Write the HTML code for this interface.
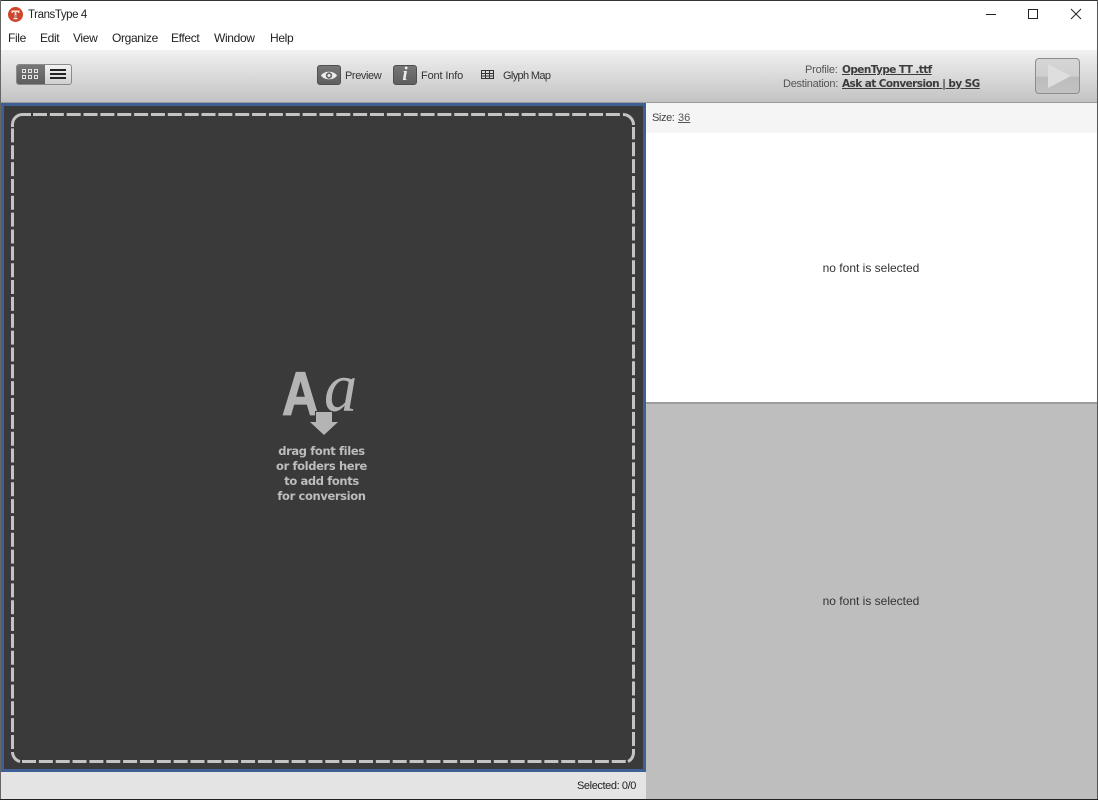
<!DOCTYPE html>
<html>
<head>
<meta charset="utf-8">
<style>
html,body{margin:0;padding:0;width:1098px;height:800px;overflow:hidden;background:#fff;}
body{position:relative;font-family:"Liberation Sans",sans-serif;font-size:12px;color:#333;}
.a{position:absolute;white-space:nowrap;}
.m{position:absolute;top:31px;font-size:12px;line-height:14px;color:#222;white-space:nowrap;letter-spacing:-.35px;}
.t{position:absolute;font-size:11px;line-height:13px;color:#333;white-space:nowrap;}
.b{position:absolute;font-family:"DejaVu Sans",sans-serif;font-weight:bold;font-size:10.5px;line-height:13px;color:#3c3c3c;text-decoration:underline;white-space:nowrap;letter-spacing:-.58px;}
.d{position:absolute;width:123px;text-align:center;left:260px;font-family:"DejaVu Sans",sans-serif;font-weight:bold;font-size:11.5px;line-height:15px;color:#bdbdbd;white-space:nowrap;letter-spacing:-.37px;}
.btn{position:absolute;background:linear-gradient(#767676,#5f5f5f);border:1px solid #505050;border-radius:3px;box-sizing:border-box;}
</style>
</head>
<body>
<div class="a" style="left:0;top:0;width:1098px;height:1px;background:#333"></div>
<div class="a" style="left:0;top:0;width:1px;height:800px;background:#666"></div>
<div class="a" style="left:1097px;top:0;width:1px;height:800px;background:#555"></div>

<svg class="a" style="left:8px;top:7px" width="15" height="15" viewBox="0 0 15 15">
<circle cx="7.5" cy="7.5" r="7.5" fill="#d2432c"/>
<path d="M3.5 3.5H11.5V6H10.3L9.8 5H8.4V11H9.5V12.3H5.5V11H6.6V5H5.2L4.7 6H3.5Z" fill="#f4e8dc"/>
<path d="M6.8 8H8.2V11H6.800Z" fill="#6fa5c8"/>
</svg>
<div class="a" style="left:28px;top:8px;font-size:11.5px;line-height:14px;color:#222;letter-spacing:-.42px">TransType 4</div>

<svg class="a" style="left:980px;top:5px" width="110" height="20" viewBox="0 0 110 20" fill="none" stroke="#222" stroke-width="1">
<path d="M6 9.5H16"/>
<rect x="48.5" y="4.5" width="9" height="9"/>
<path d="M91 4L101 14M101 4L91 14"/>
</svg>

<div class="m" style="left:8px">File</div>
<div class="m" style="left:40px">Edit</div>
<div class="m" style="left:73px">View</div>
<div class="m" style="left:112px">Organize</div>
<div class="m" style="left:171px">Effect</div>
<div class="m" style="left:214px">Window</div>
<div class="m" style="left:270px">Help</div>

<div class="a" style="left:1px;top:50px;width:1096px;height:52px;background:linear-gradient(#f1f1f1,#c3c3c3)"></div>
<div class="a" style="left:1px;top:102px;width:1096px;height:1px;background:#9a9a9a"></div>

<div class="a" style="left:16px;top:64px;width:56px;height:21px;box-sizing:border-box;border:1px solid #8a8a8a;border-radius:3px;background:linear-gradient(#f2f2f2,#cfcfcf);overflow:hidden">
<div class="a" style="left:0;top:0;width:28px;height:19px;background:linear-gradient(#777,#5e5e5e)"></div>
</div>
<svg class="a" style="left:22px;top:69px" width="16" height="11" viewBox="0 0 16 11" fill="none" stroke="#e4e4e4" stroke-width="1">
<rect x=".5" y=".5" width="3" height="3"/><rect x="6.5" y=".5" width="3" height="3"/><rect x="12.5" y=".5" width="3" height="3"/>
<rect x=".5" y="6.5" width="3" height="3"/><rect x="6.5" y="6.5" width="3" height="3"/><rect x="12.5" y="6.5" width="3" height="3"/>
</svg>
<svg class="a" style="left:50px;top:69px" width="16" height="11" viewBox="0 0 16 11" fill="#222">
<rect y="0" width="16" height="2"/><rect y="4" width="16" height="2"/><rect y="8" width="16" height="2"/>
</svg>

<div class="btn" style="left:317px;top:65px;width:24px;height:20px"></div>
<svg class="a" style="left:320px;top:70px" width="18" height="12" viewBox="0 0 18 12">
<path d="M1 5.500C4 .5 14 .5 17 5.500C14 10.500 4 10.500 1 5.500Z" fill="#eee"/>
<circle cx="9" cy="5.500" r="3.200" fill="#666"/><circle cx="9" cy="5.500" r="1.500" fill="#eee"/>
</svg>
<div class="t" style="left:345px;top:70px;letter-spacing:-.4px">Preview</div>

<div class="btn" style="left:393px;top:65px;width:24px;height:20px"></div>
<div class="a" style="left:393px;top:65px;width:24px;height:20px;text-align:center;font-family:'Liberation Serif',serif;font-style:italic;font-weight:bold;font-size:19px;line-height:20px;color:#eee">i</div>
<div class="t" style="left:421px;top:70px;letter-spacing:-.15px">Font Info</div>

<svg class="a" style="left:481px;top:70px" width="14" height="10" viewBox="0 0 14 10" fill="none" stroke="#333" stroke-width="1">
<rect x=".5" y=".5" width="12" height="8"/><path d="M4.500 .5V8.500M8.500 .5V8.500M.5 3.500H12.500M.5 6H12.500"/>
</svg>
<div class="t" style="left:503px;top:70px;letter-spacing:-.65px">Glyph Map</div>

<div class="t" style="left:805px;top:64px;color:#555;letter-spacing:-.2px">Profile:</div>
<div class="t" style="left:783px;top:78px;color:#555;letter-spacing:-.25px">Destination:</div>
<div class="b" style="left:842px;top:64px">OpenType TT .ttf</div>
<div class="b" style="left:842px;top:78px">Ask at Conversion | by SG</div>

<div class="a" style="left:1035px;top:58px;width:45px;height:36px;box-sizing:border-box;border:1px solid #8e8e8e;border-radius:4px;background:linear-gradient(#d6d6d6 0,#cfcfcf 50%,#bcbcbc 54%,#c2c2c2 100%)"></div>
<svg class="a" style="left:1047px;top:63px" width="26" height="26" viewBox="0 0 26 26"><path d="M1 1L24 13L1 25Z" fill="#dedede"/></svg>

<div class="a" style="left:1px;top:103px;width:645px;height:669px;box-sizing:border-box;border:3px solid #3f6094;background:#3a3a3a"></div>
<svg class="a" style="left:0;top:0" width="646" height="772" viewBox="0 0 646 772" fill="none" stroke="#c4c4c4" stroke-width="3">
<path d="M33 114.500H621" stroke-dasharray="14 2.850"/>
<path d="M22 761.500H626" stroke-dasharray="14 2.850"/>
<path d="M12.500 749V128" stroke-dasharray="14 2.850"/>
<path d="M633.500 746V127" stroke-dasharray="14 2.850"/>
<path d="M12.500 127V124.500A10 10 0 0 1 22.500 114.500H31"/>
<path d="M623 114.500A10.500 10.500 0 0 1 633.500 125"/>
<path d="M12.500 752A10 10 0 0 0 20 761.500"/>
<path d="M633.500 749V752A10 10 0 0 1 628 761.500"/>
</svg>

<div class="a" style="left:282px;top:359px;font-family:'Liberation Sans',sans-serif;font-weight:bold;font-size:61px;line-height:70px;color:#b4b4b4;-webkit-text-stroke:1.2px #b4b4b4;transform:scaleX(.84);transform-origin:0 50%">A</div>
<div class="a" style="left:324px;top:354px;font-family:'Liberation Serif',serif;font-style:italic;font-size:70px;line-height:70px;color:#b4b4b4;transform:scaleX(.95);transform-origin:0 50%">a</div>
<svg class="a" style="left:300px;top:405px" width="46" height="34" viewBox="300 405 46 34">
<path d="M316 412H332V422H338L324 435L310 422H316Z" fill="#b4b4b4" stroke="#3a3a3a" stroke-width="2" paint-order="stroke"/>
</svg>
<div class="d" style="top:444px">drag font files</div>
<div class="d" style="top:459px">or folders here</div>
<div class="d" style="top:474px">to add fonts</div>
<div class="d" style="top:489px">for conversion</div>

<div class="a" style="left:1px;top:772px;width:644px;height:27px;background:#e4e4e4"></div>
<div class="t" style="left:577px;top:780px;color:#222;letter-spacing:-.4px">Selected: 0/0</div>

<div class="a" style="left:646px;top:103px;width:451px;height:30px;background:#f5f5f5"></div>
<div class="t" style="left:652px;top:112px;color:#444;letter-spacing:-.4px">Size:</div>
<div class="t" style="left:678px;top:112px;color:#555;text-decoration:underline">36</div>
<div class="a" style="left:646px;top:133px;width:451px;height:269px;background:#fff"></div>
<div class="a" style="left:646px;top:402px;width:451px;height:2px;background:#9d9d9d"></div>
<div class="a" style="left:646px;top:404px;width:451px;height:395px;background:#bebebe"></div>
<div class="a" style="left:645px;top:772px;width:1px;height:27px;background:#e4e4e4"></div>
<div class="a" style="left:646px;top:261px;width:450px;text-align:center;font-size:12px;line-height:14px;color:#333">no font is selected</div>
<div class="a" style="left:646px;top:594px;width:450px;text-align:center;font-size:12px;line-height:14px;color:#333">no font is selected</div>

<div class="a" style="left:0;top:799px;width:1098px;height:1px;background:#222"></div>
</body>
</html>
